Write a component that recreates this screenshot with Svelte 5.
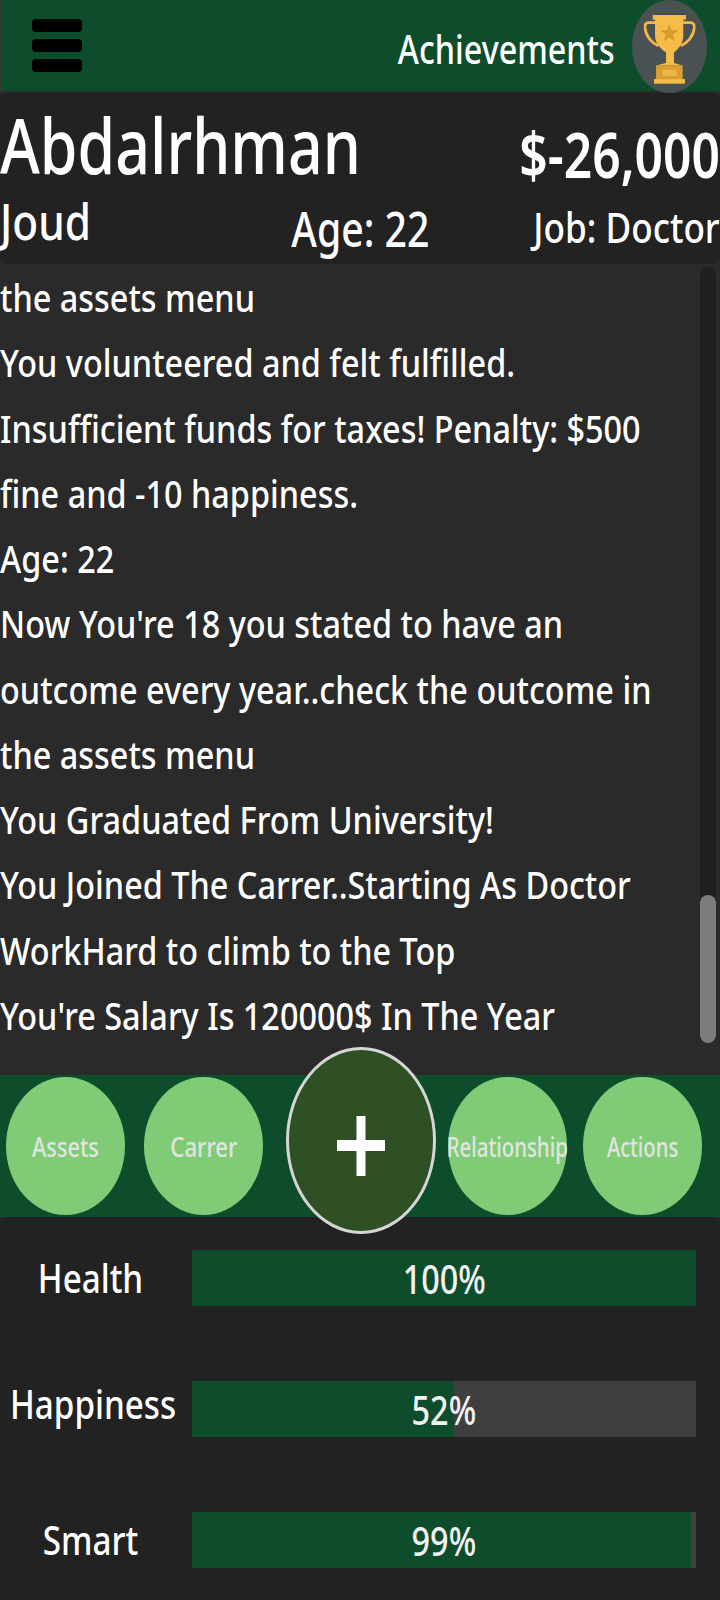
<script>
  const log = [
    'the assets menu',
    'You volunteered and felt fulfilled.',
    'Insufficient funds for taxes! Penalty: $500',
    'fine and -10 happiness.',
    'Age: 22',
    "Now You're 18 you stated to have an",
    'outcome every year..check the outcome in',
    'the assets menu',
    'You Graduated From University!',
    'You Joined The Carrer..Starting As Doctor',
    'WorkHard to climb to the Top',
    "You're Salary Is 120000$ In The Year"
  ];
  const stats = [
    { name: 'Health', value: 100 },
    { name: 'Happiness', value: 52 },
    { name: 'Smart', value: 99 }
  ];
</script>

<div class="screen">
  <header class="top">
    <div class="burger"><i></i><i></i><i></i></div>
    <div class="ach">
      <span class="t achText">Achievements</span>
      <div class="trophy">
        <svg viewBox="96 0 225 280" width="75" height="93">
          <path d="M170 68H145Q133 68 135 85C138 110 155 130 175 138M248 68H272Q285 68 283 85C280 110 262 130 242 138" fill="none" stroke="#f4b844" stroke-width="8"/>
          <path d="M165 56H250V108C250 130 236 148 222 158V190L248 197H168L198 190V158C182 148 165 130 165 108Z" fill="#f6bc4a"/>
          <rect x="158" y="44" width="100" height="15" fill="#f6bc4a"/>
          <rect x="160" y="42" width="96" height="3" fill="#36404a"/>
          <path d="M208 72l7 19h21l-17 13 6 21-17-12-17 12 6-21-17-13h21z" fill="#d99a2c"/>
          <rect x="168" y="197" width="80" height="41" fill="#dc9e30"/>
          <rect x="188" y="210" width="42" height="18" fill="#f0b848"/>
          <rect x="162" y="238" width="93" height="14" fill="#f6bc4a"/>
        </svg>
      </div>
    </div>
  </header>

  <section class="info">
    <div class="row one">
      <span class="t name">Abdalrhman</span>
      <span class="t money">$-26,000</span>
    </div>
    <div class="row two">
      <span class="t joud">Joud</span>
      <span class="t age">Age: 22</span>
      <span class="t job">Job: Doctor</span>
    </div>
  </section>

  <section class="log">
    <div class="lines">
      {#each log as line}
        <div class="line"><span class="t">{line}</span></div>
      {/each}
    </div>
    <div class="track"><div class="thumb"></div></div>
  </section>

  <nav class="nav">
    <button class="circle"><span class="t assets">Assets</span></button>
    <button class="circle"><span class="t carrer">Carrer</span></button>
    <button class="plus"><svg viewBox="0 0 48 60" width="48" height="60"><path d="M19.500 0h9v24H48v11H28.500v25h-9V35H0V24h19.500z" fill="#fff"/></svg></button>
    <button class="circle"><span class="t rel">Relationship</span></button>
    <button class="circle"><span class="t actions">Actions</span></button>
  </nav>

  <section class="stats">
    {#each stats as s}
      <div class="stat">
        <div class="label"><span class="t">{s.name}</span></div>
        <div class="bar">
          <div class="fill" style="width:{s.value}%"></div>
          <span class="t pct">{s.value}%</span>
        </div>
      </div>
    {/each}
  </section>
</div>

<style>
  :global(body) { margin: 0; background: #2a2a2a; }
  .screen { width: 720px; height: 1600px; display: flex; flex-direction: column; overflow: hidden; font-family: "Noto Sans", "Open Sans", sans-serif; font-weight: 500; color: #fff; background: #2a2a2a; }
  .t { display: inline-block; transform: scaleX(0.83); white-space: nowrap; }

  .top { height: 91px; margin-bottom: 2px; background: #0e4d2c; border-left: 1px solid #3a3a3a; display: flex; justify-content: space-between; align-items: center; box-sizing: border-box; flex: none; position: relative; z-index: 1; }
  .burger { margin-left: 31px; width: 50px; display: flex; flex-direction: column; gap: 7px; }
  .burger i { display: block; height: 13px; background: #000; border-radius: 4px; }
  .ach { display: flex; align-items: center; }
  .achText { font-size: 40px; transform: scaleX(0.807); transform-origin: right center; margin-right: 17px; margin-top: 5px; }
  .trophy { width: 75px; height: 93px; border-radius: 50%; background: #4a5152; margin-right: 13px; margin-top: 2px; flex: none; }
  .trophy svg { display: block; }

  .info { height: 171px; flex: none; background: #222; border-radius: 6px; }
  .row { display: flex; justify-content: space-between; }
  .one { height: 104px; }
  .name { font-size: 77px; line-height: 104px; height: 104px; transform: scaleX(0.79); transform-origin: left center; }
  .money { font-size: 63px; font-weight: 600; line-height: 87px; height: 87px; margin-top: 17px; transform: scaleX(0.79); transform-origin: right center; }
  .two { display: grid; grid-template-columns: 1fr auto 1fr; height: 67px; }
  .joud { font-size: 51px; line-height: 46px; height: 46px; transform-origin: left center; justify-self: start; }
  .age { font-size: 49px; line-height: 62px; height: 62px; transform: scaleX(0.8); }
  .job { font-size: 42px; line-height: 59px; height: 59px; transform: scaleX(0.837); transform-origin: right center; justify-self: end; }

  .log { height: 811px; flex: none; background: #2a2a2a; position: relative; overflow: hidden; }
  .lines { margin-top: 1px; }
  .line { height: 65.250px; line-height: 65.250px; font-size: 38px; }
  .line .t { transform: scaleX(0.853); transform-origin: left center; }
  .track { position: absolute; right: 4px; top: 3px; width: 16px; bottom: 32px; background: #202020; border-radius: 8px; }
  .thumb { position: absolute; left: 0; right: 0; bottom: 0; height: 148px; background: #7c7c7c; border-radius: 8px; }

  .nav { height: 142px; flex: none; background: #0e4d2c; display: flex; align-items: center; padding-left: 6px; position: relative; z-index: 1; }
  button { border: none; padding: 0; font-family: inherit; font-weight: inherit; flex: none; }
  .circle { width: 119px; height: 138px; border-radius: 50%; background: #80cc76; color: #e3e3e3; font-size: 27px; display: flex; align-items: center; justify-content: center; }
  .circle .t { flex: none; }
  .circle:nth-child(2) { margin-left: 19px; }
  .circle:nth-child(4) { margin-left: 12px; }
  .circle:nth-child(5) { margin-left: 16px; }
  .assets { transform: scaleX(0.805); }
  .carrer { transform: scaleX(0.82); }
  .rel { transform: scaleX(0.755); }
  .actions { transform: scaleX(0.75); }
  .plus { margin-left: 23px; margin-bottom: 11px; width: 150px; height: 187px; box-sizing: border-box; border-radius: 50%; background: #2f4f25; border: 3px solid #d6d6d6; display: flex; align-items: center; justify-content: center; }
  .plus svg { margin-top: 11px; }

  .stats { flex: 1; background: #222; border-radius: 6px; padding-top: 33px; }
  .stat { display: flex; height: 56px; margin-bottom: 75px; align-items: center; }
  .label { width: 180px; margin-right: 12px; font-size: 40px; line-height: 56px; flex: none; display: flex; justify-content: center; }
  .label .t { flex: none; transform: scaleX(0.83); }
  .stat:nth-child(2) .label { transform: translate(3px, -5px); }
  .bar { position: relative; width: 504px; height: 56px; background: #3f3f3f; display: flex; align-items: center; justify-content: center; font-size: 40px; flex: none; }
  .fill { position: absolute; left: 0; top: 0; bottom: 0; background: #0e4d2c; }
  .pct { position: relative; color: #f2f2f2; transform: scaleX(0.81); }
</style>
